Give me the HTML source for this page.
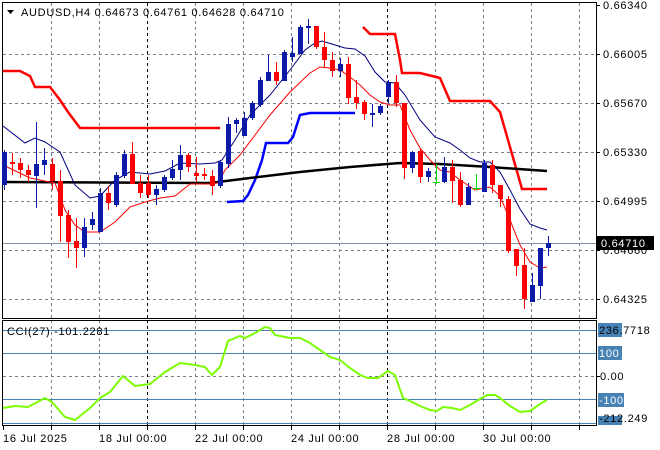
<!DOCTYPE html>
<html><head><meta charset="utf-8"><style>
html,body{margin:0;padding:0;background:#fff;width:660px;height:450px;overflow:hidden}
svg{display:block}
text{font-family:"Liberation Sans","DejaVu Sans",sans-serif;font-size:11px;fill:#000;letter-spacing:0.7px}
</style></head><body>
<svg width="660" height="450" viewBox="0 0 660 450" xmlns="http://www.w3.org/2000/svg">
<rect width="660" height="450" fill="#fff"/>
<g stroke="#778088" stroke-width="1" stroke-dasharray="3,3">
<path d="M51.5 3V318M99.5 3V318M195.5 3V318M243.5 3V318M291.5 3V318M339.5 3V318M435.5 3V318M483.5 3V318M531.5 3V318M579.5 3V318"/>
<path d="M51.5 320V425M99.5 320V425M195.5 320V425M243.5 320V425M291.5 320V425M339.5 320V425M435.5 320V425M483.5 320V425M531.5 320V425M579.5 320V425"/>
<path d="M3 54.5H596M3 103.5H596M3 152.5H596M3 201.5H596M3 250.5H596M3 299.5H596M3 376.5H596"/>
</g>
<g stroke="#000" stroke-width="1" stroke-dasharray="3,3">
<path d="M147.5 3V318M387.5 3V318M147.5 320V425M387.5 320V425"/>
</g>
<path d="M3 243.5H596" stroke="#8090a0" stroke-width="1"/>
<g stroke="#4682b4" stroke-width="1"><path d="M3 330.5H596M3 353.5H596M3 399.5H596M3 423.5H596"/></g>
<rect x="2.5" y="2.5" width="594" height="316" fill="none" stroke="#000"/>
<rect x="2.5" y="320.5" width="594" height="105" fill="none" stroke="#000"/>
<polyline fill="none" stroke="#f00" stroke-width="2.5" points="3,71 20,71 30,76 35,87 50,87 60,100 68,112 80,128 220,128"/>
<polyline fill="none" stroke="#f00" stroke-width="2.5" points="363,27 370,34 395,34 400,60 402,73 420,73 440,78 450,101 490,101 500,112 522,189 547,189"/>
<polyline fill="none" stroke="#00f" stroke-width="2.5" points="227,202 243,201 248,195 255,180 262,160 266,143 288,143 293,137 300,115 305,114 310,113 355,113"/>
<polyline fill="none" stroke="#000" stroke-width="2.5" points="3,182 210,183 250,178 300,172 350,167 400,163 440,164 490,167 547,171"/>
<polyline fill="none" stroke="#000080" stroke-width="1" points="3,126 25,143 35,138 45,142 60,152 75,185 90,198 100,196 115,180 130,172 150,174 165,171 180,163 200,164 215,163 222,160 235,140 250,115 270,95 290,70 305,50 315,43 322,41 335,45 345,48 355,49 365,56 375,72 385,82 395,83 405,95 420,120 435,137 450,143 460,150 470,158 480,162 490,162 500,172 510,190 520,209 530,224 540,228 547,230"/>
<polyline fill="none" stroke="#f00" stroke-width="1" points="3,165 30,178 40,180 55,183 65,210 75,225 85,232 100,232 115,222 130,207 145,202 160,198 175,196 190,184 210,184 218,183 225,170 240,155 255,135 270,115 290,92 310,73 320,67 330,68 340,70 350,77 360,85 370,95 380,102 390,105 400,105 410,130 420,148 430,160 440,170 450,172 460,180 475,190 490,187 500,196 510,220 520,245 530,262 540,268 547,267"/>
<g>
<g stroke="#0c1aa8" fill="#0c1aa8">
<path d="M4.5 150V190M36.5 122V208M44.5 148V175M84.5 218V257M92.5 212V230M100.5 188V232M116.5 172V207M124.5 150V178M156.5 185V205M164.5 175V192M172.5 160V180M180.5 145V180M220.5 160V188M228.5 117V168M236.5 118V133M244.5 112V136M252.5 101V120M260.5 77V107M268.5 55V81M284.5 50V81M292.5 37V62M300.5 25V54M308.5 19V44M340.5 58V77M372.5 104V127M380.5 104V115M388.5 80V103M412.5 151V173M428.5 168V182M444.5 157V183M468.5 183V205M484.5 160V192M532.5 273V302M540.5 248V299M548.5 236V256"/>
</g>
<g fill="#0c1aa8">
<rect x="2" y="152" width="5" height="33"/><rect x="34" y="164" width="5" height="12"/><rect x="42" y="160" width="5" height="5"/><rect x="82" y="227" width="5" height="21"/><rect x="90" y="219" width="5" height="6"/><rect x="98" y="193" width="5" height="39"/><rect x="114" y="175" width="5" height="30"/><rect x="122" y="154" width="5" height="22"/><rect x="154" y="189" width="5" height="6"/><rect x="162" y="177" width="5" height="13"/><rect x="170" y="169" width="5" height="9"/><rect x="178" y="155" width="5" height="15"/><rect x="218" y="162" width="5" height="24"/><rect x="226" y="124" width="5" height="40"/><rect x="234" y="120" width="5" height="4"/><rect x="242" y="118" width="5" height="18"/><rect x="250" y="103" width="5" height="15"/><rect x="258" y="80" width="5" height="25"/><rect x="266" y="72" width="5" height="9"/><rect x="282" y="52" width="5" height="29"/><rect x="290" y="53" width="5" height="4"/><rect x="298" y="27" width="5" height="27"/><rect x="306" y="26" width="5" height="2"/><rect x="338" y="64" width="5" height="7"/><rect x="370" y="113" width="5" height="2"/><rect x="378" y="106" width="5" height="7"/><rect x="386" y="83" width="5" height="14"/><rect x="410" y="152" width="5" height="16"/><rect x="426" y="171" width="5" height="6"/><rect x="442" y="167" width="5" height="15"/><rect x="466" y="187" width="5" height="18"/><rect x="482" y="163" width="5" height="29"/><rect x="530" y="285" width="5" height="17"/><rect x="538" y="248" width="5" height="38"/><rect x="546" y="243" width="5" height="5"/>
</g>
<g stroke="#f00">
<path d="M12.5 153V175M20.5 158V178M28.5 165V182M52.5 158V190M60.5 170V242M68.5 210V258M76.5 218V268M108.5 186V210M132.5 142V184M140.5 175V198M148.5 175V198M188.5 153V172M196.5 157V182M204.5 168V180M212.5 170V195M276.5 62V85M316.5 26V49M324.5 32V67M332.5 52V77M348.5 57V104M356.5 80V109M364.5 100V120M396.5 75V107M404.5 103V179M420.5 148V183M452.5 160V203M460.5 172V207M492.5 160V193M500.5 185V207M508.5 196V253M516.5 249V276M524.5 248V309"/>
</g>
<g fill="#f00">
<rect x="10" y="162" width="5" height="2"/><rect x="18" y="163" width="5" height="7"/><rect x="26" y="170" width="5" height="5"/><rect x="50" y="164" width="5" height="17"/><rect x="58" y="181" width="5" height="35"/><rect x="66" y="215" width="5" height="27"/><rect x="74" y="241" width="5" height="7"/><rect x="106" y="193" width="5" height="10"/><rect x="130" y="154" width="5" height="30"/><rect x="138" y="183" width="5" height="10"/><rect x="146" y="183" width="5" height="12"/><rect x="186" y="155" width="5" height="12"/><rect x="194" y="173" width="5" height="3"/><rect x="202" y="174" width="5" height="2"/><rect x="210" y="176" width="5" height="10"/><rect x="274" y="72" width="5" height="9"/><rect x="314" y="26" width="5" height="21"/><rect x="322" y="47" width="5" height="13"/><rect x="330" y="60" width="5" height="11"/><rect x="346" y="64" width="5" height="34"/><rect x="354" y="97" width="5" height="6"/><rect x="362" y="102" width="5" height="12"/><rect x="394" y="82" width="5" height="21"/><rect x="402" y="103" width="5" height="65"/><rect x="418" y="151" width="5" height="26"/><rect x="450" y="167" width="5" height="14"/><rect x="458" y="180" width="5" height="25"/><rect x="490" y="165" width="5" height="20"/><rect x="498" y="185" width="5" height="14"/><rect x="506" y="199" width="5" height="52"/><rect x="514" y="249" width="5" height="17"/><rect x="522" y="265" width="5" height="34"/>
</g>
<g stroke="#00e000"><path d="M436.5 164V184M433 182.5H440M476.5 174V190M473 188.5H480"/></g>
</g>
<polyline fill="none" stroke="#7cfc00" stroke-width="2" points="3,408 15,406 28,407 45,398 52,402 65,417 75,420 90,408 100,398 110,392 123,376 135,386 150,384 165,372 180,363 195,365 205,367 212,375 220,367 228,341 240,336 245,338 255,333 265,327 270,328 275,335 290,338 300,338 310,343 320,350 330,357 340,360 350,368 360,375 368,378 378,378 388,371 395,375 403,398 410,401 420,406 430,410 437,411 443,407 452,408 460,410 470,405 480,399 487,395 495,395 500,398 510,406 520,412 530,411 540,404 547,400"/>
<path d="M7 10H14L10.5 14Z" fill="#000"/>
<text x="21" y="16">AUDUSD,H4  0.64673 0.64761 0.64628 0.64710</text>
<text x="7" y="335">CCI(27) -101.2281</text>
<g stroke="#000"><path d="M596 5.5H600M596 54.5H600M596 103.5H600M596 152.5H600M596 201.5H600M596 250.5H600M596 299.5H600M596 376.5H600"/></g>
<text x="603" y="9">0.66340</text>
<text x="603" y="58">0.66005</text>
<text x="603" y="107">0.65670</text>
<text x="603" y="156">0.65330</text>
<text x="603" y="205">0.64995</text>
<text x="603" y="254">0.64660</text>
<text x="603" y="303">0.64325</text>
<rect x="597" y="236" width="57" height="14" fill="#000"/>
<text x="601" y="247" style="fill:#fff">0.64710</text>
<rect x="598" y="323" width="24" height="14" fill="#4682b4"/>
<text x="599" y="334">236.7718</text>
<rect x="598" y="346" width="24" height="14" fill="#4682b4"/>
<text x="599" y="357" style="fill:#fff">100</text>
<text x="600" y="380">0.00</text>
<rect x="598" y="393" width="26" height="14" fill="#4682b4"/>
<text x="599" y="404" style="fill:#fff">-100</text>
<rect x="598" y="416" width="24" height="9" fill="#4682b4"/>
<text x="599" y="422">-212.249</text>
<g stroke="#000"><path d="M3.5 426V430M51.5 426V430M99.5 426V430M147.5 426V430M195.5 426V430M243.5 426V430M291.5 426V430M339.5 426V430M387.5 426V430M435.5 426V430M483.5 426V430M531.5 426V430M579.5 426V430"/></g>
<text x="3" y="442">16 Jul 2025</text>
<text x="99" y="442">18 Jul 00:00</text>
<text x="195" y="442">22 Jul 00:00</text>
<text x="291" y="442">24 Jul 00:00</text>
<text x="387" y="442">28 Jul 00:00</text>
<text x="483" y="442">30 Jul 00:00</text>
</svg>
</body></html>
